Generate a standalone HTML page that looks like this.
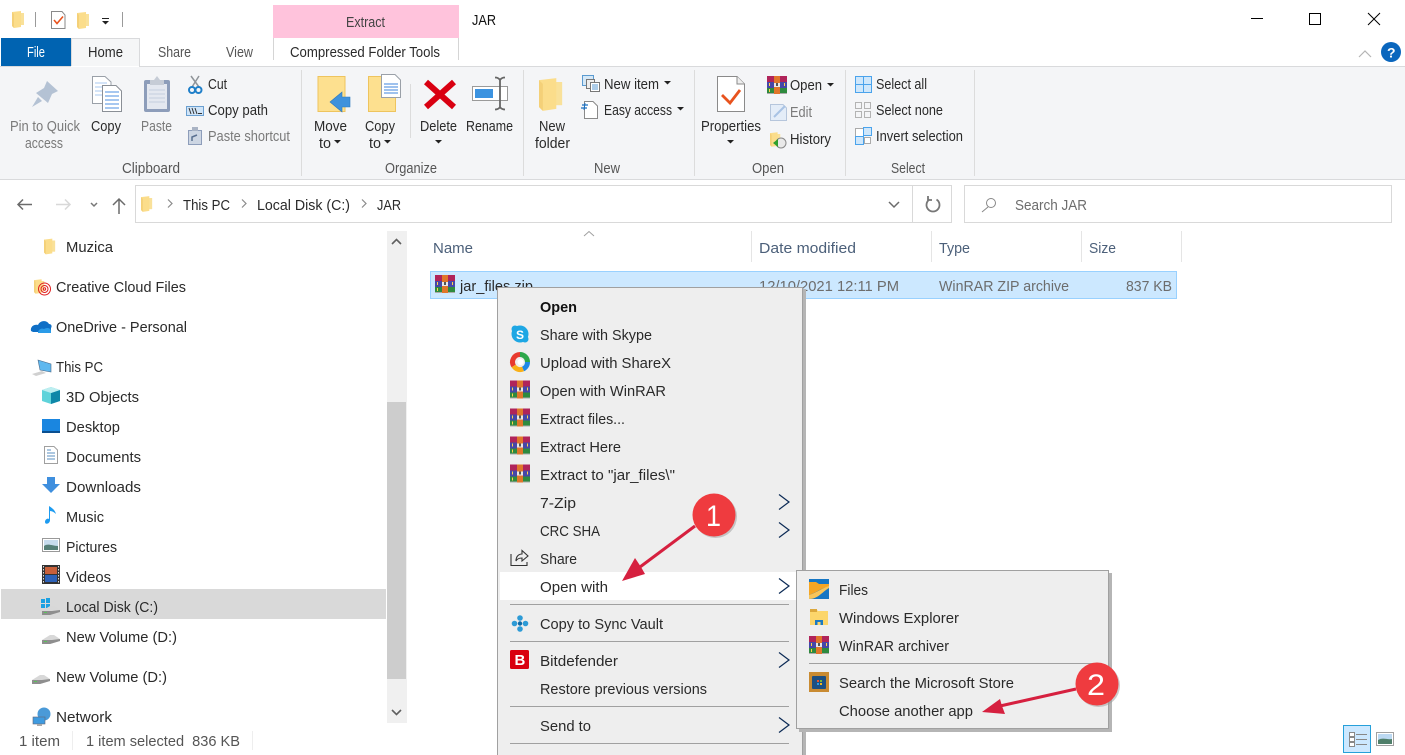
<!DOCTYPE html>
<html><head><meta charset="utf-8"><title>JAR</title>
<style>
html,body{margin:0;padding:0;background:#fff;overflow:hidden}
svg{display:block}
text{font-family:"Liberation Sans",sans-serif;font-size:14.6px;fill:#2a2a2a}
.g{fill:#7a7a7a}.h{fill:#4c607a}.m{fill:#6d6d6d}.d{fill:#555}
.l{stroke:#d9d9d9;stroke-width:1;fill:none}
.ch{fill:none;stroke-width:1.2}
</style></head><body>
<svg width="1405" height="755" viewBox="0 0 1405 755" xmlns="http://www.w3.org/2000/svg">
<defs>
<symbol id="fold" viewBox="0 0 13 17" overflow="visible">
<path d="M0 1 L9 0 L9 2 L12 2 L12 14 L9 14 L9 16 L2 17 L0 15Z" fill="#fbdd8b"/>
<path d="M0 1 L2 3 V17 L0 15Z" fill="#f4d078"/>
<path d="M9 2 H12 V14 H9Z" fill="#f9e19a"/>
</symbol>
<symbol id="rar" viewBox="0 0 20 18" overflow="visible">
<rect x="0" y="0" width="20" height="6" fill="#b0245a"/>
<rect x="0" y="6" width="20" height="6" fill="#4547a8"/>
<rect x="0" y="12" width="20" height="6" fill="#2e8a3e"/>
<rect x="0" y="17" width="20" height="1" fill="#aaa"/>
<rect x="7" y="0" width="6" height="18" fill="#e0762b"/>
<rect x="7" y="7" width="6" height="4" fill="#e8e8e8"/>
<rect x="9" y="7" width="2" height="3" fill="#555"/>
<rect x="2" y="7" width="1" height="3" fill="#ffd24a"/>
<rect x="2" y="13" width="1" height="3" fill="#ffd24a"/>
<rect x="17" y="7" width="1" height="3" fill="#ffd24a"/>
</symbol>
<symbol id="drv" viewBox="0 0 18 10" overflow="visible">
<path d="M0 6 L8 1 H12 L18 5 V7 L8 10 H0Z" fill="#d8d8d8"/>
<path d="M0 6 L10 6 L18 5 V7 L8 10 H0Z" fill="#8e8e8e"/>
<rect x="2" y="7" width="3" height="1" fill="#5bc25b"/>
</symbol>
</defs>

<rect width="1405" height="755" fill="#fff"/>

<!-- QAT -->
<use href="#fold" x="12" y="11" width="13" height="17"/>
<line x1="35.5" y1="12" x2="35.5" y2="27" stroke="#9a9a9a"/>
<path d="M51.5 11.5 H62 L65 15 V28.5 H51.5Z" fill="#fff" stroke="#8a8a8a"/>
<path d="M54 20 L57 23.5 L63 16.5" fill="none" stroke="#e8531e" stroke-width="1.6"/>
<use href="#fold" x="77" y="12" width="13" height="17"/>
<rect x="102" y="18" width="7" height="1" fill="#222"/><path d="M102 21 H109 L105.5 24.5Z" fill="#222"/>
<line x1="122.5" y1="12" x2="122.5" y2="27" stroke="#9a9a9a"/>

<!-- Tabs -->
<rect x="273" y="5" width="186" height="33" fill="#ffc3dc"/>
<text x="346" y="27" textLength="39" lengthAdjust="spacingAndGlyphs" fill="#444" style="fill:#444">Extract</text>
<line x1="273.5" y1="38" x2="273.5" y2="60" stroke="#d5d5d5"/>
<line x1="458.5" y1="38" x2="458.5" y2="60" stroke="#d5d5d5"/>
<text x="472" y="25" textLength="24" lengthAdjust="spacingAndGlyphs" style="fill:#111">JAR</text>
<rect x="1" y="38" width="70" height="28" fill="#0063b1"/>
<text x="27" y="57" textLength="18" lengthAdjust="spacingAndGlyphs" style="fill:#fff">File</text>
<path d="M71.5 66 V38.5 H139.5 V66" fill="#f5f6f7" stroke="#d9dadc"/>
<text x="88" y="57" textLength="35" lengthAdjust="spacingAndGlyphs">Home</text>
<text x="158" y="57" textLength="33" lengthAdjust="spacingAndGlyphs" class="d">Share</text>
<text x="226" y="57" textLength="27" lengthAdjust="spacingAndGlyphs" class="d">View</text>
<text x="290" y="57" textLength="150" lengthAdjust="spacingAndGlyphs">Compressed Folder Tools</text>
<path d="M1359 57 L1365 51 L1371 57" fill="none" stroke="#b5b5b5" stroke-width="1.2"/>
<circle cx="1391" cy="52" r="10" fill="#0a66bd"/>
<text x="1387" y="57.500" style="fill:#fff;font-weight:bold;font-size:14px">?</text>

<!-- Window controls -->
<rect x="1251" y="18" width="12" height="1" fill="#000"/>
<rect x="1309.500" y="13.500" width="11" height="11" fill="none" stroke="#000"/>
<path d="M1368 13 L1380 25 M1380 13 L1368 25" stroke="#000" fill="none"/>

<!-- Ribbon -->
<rect x="0" y="67" width="1405" height="112" fill="#f4f5f7"/>
<rect x="0" y="66" width="71" height="1" fill="#d9dadc"/><rect x="139" y="66" width="1266" height="1" fill="#d9dadc"/>
<rect x="0" y="179" width="1405" height="1" fill="#d9dadc"/>
<g stroke="#dcdcdc"><line x1="301.500" y1="70" x2="301.500" y2="176"/><line x1="523.500" y1="70" x2="523.500" y2="176"/><line x1="694.500" y1="70" x2="694.500" y2="176"/><line x1="845.500" y1="70" x2="845.500" y2="176"/><line x1="974.500" y1="70" x2="974.500" y2="176"/><line x1="410.500" y1="84" x2="410.500" y2="138"/></g>

<!-- Pin -->
<path d="M47 81 L58 91 L52 94 L48 103 L36 93 L44 88Z M38 97 L32 107 L42 101Z" fill="#b4c2d4"/>
<!-- Copy -->
<path d="M92.500 76.500 H105 L111 82 V103.500 H92.500Z" fill="#fff" stroke="#9aa0a8"/>
<path d="M95 83 H107 M95 87 H107 M95 91 H107 M95 95 H107" stroke="#a9c8f0"/>
<path d="M102.500 85.500 H116 L121.500 91 V111.500 H102.500Z" fill="#fff" stroke="#8a8f96"/>
<path d="M105 92 H119 M105 96 H119 M105 100 H119 M105 104 H119 M105 108 H119" stroke="#4c8fe0"/>
<!-- Paste -->
<rect x="144" y="80" width="26" height="32" rx="2" fill="#8d9dba"/>
<rect x="147" y="84" width="20" height="25" fill="#e4e8f0"/>
<path d="M149 90 H165 M149 94 H165 M149 98 H165 M149 102 H165" stroke="#c5cede"/>
<path d="M150 80 H154 L157 76 L160 80 H164 V85 H150Z" fill="#c6ccd6"/>
<!-- Cut -->
<path d="M191 76 L199 87 M199 76 L192 87" stroke="#8f9499" stroke-width="1.5" fill="none"/>
<circle cx="192" cy="90" r="3" fill="none" stroke="#1f7fc9" stroke-width="2"/><circle cx="198.500" cy="90" r="3" fill="none" stroke="#1f7fc9" stroke-width="2"/>
<!-- Copy path -->
<rect x="186.500" y="106.500" width="17" height="9" fill="#cfe4f8" stroke="#6a9fd0"/>
<path d="M189 108 L191 114 M192 108 L194 114 M195 108 L197 114" stroke="#333"/>
<rect x="198" y="113" width="4" height="1" fill="#333"/>
<!-- Paste shortcut -->
<rect x="188.500" y="130.500" width="13" height="14" fill="#cdd6e3" stroke="#8d9dba"/>
<rect x="192" y="127" width="6" height="4" fill="#a9b3c4"/>
<path d="M192 141 V137 L197 135" fill="none" stroke="#5a7090" stroke-width="1.500"/>
<text x="10" y="131" textLength="70" lengthAdjust="spacingAndGlyphs" class="g">Pin to Quick</text>
<text x="25" y="148" textLength="38" lengthAdjust="spacingAndGlyphs" class="g">access</text>
<text x="91" y="131" textLength="30" lengthAdjust="spacingAndGlyphs">Copy</text>
<text x="141" y="131" textLength="31" lengthAdjust="spacingAndGlyphs" class="g">Paste</text>
<text x="208" y="89" textLength="19" lengthAdjust="spacingAndGlyphs">Cut</text>
<text x="208" y="115" textLength="60" lengthAdjust="spacingAndGlyphs">Copy path</text>
<text x="208" y="141" textLength="82" lengthAdjust="spacingAndGlyphs" class="g">Paste shortcut</text>
<text x="122" y="173" textLength="58" lengthAdjust="spacingAndGlyphs" class="d">Clipboard</text>

<!-- Move to -->
<rect x="318" y="76.500" width="27" height="35" fill="#fde08f" stroke="#eec45e"/>
<path d="M330 103 L342 93 V98 H350 V108 H342 V113Z" fill="#3f92dc" stroke="#2d78bd" stroke-width=".6" transform="translate(0,-1)"/>
<text x="314" y="131" textLength="33" lengthAdjust="spacingAndGlyphs">Move</text>
<text x="319" y="148" textLength="12" lengthAdjust="spacingAndGlyphs">to</text>
<path d="M334 140 H341 L337.500 143.500Z" fill="#222"/>
<!-- Copy to -->
<rect x="368.500" y="76.500" width="27" height="35" fill="#fde08f" stroke="#eec45e"/>
<path d="M381.500 74.500 H395 L400.500 80 V97.500 H381.500Z" fill="#fff" stroke="#9aa0a8"/>
<path d="M384 84 H398 M384 87 H398 M384 90 H398 M384 93 H398" stroke="#3f86de"/>
<text x="365" y="131" textLength="30" lengthAdjust="spacingAndGlyphs">Copy</text>
<text x="369" y="148" textLength="12" lengthAdjust="spacingAndGlyphs">to</text>
<path d="M384 140 H391 L387.500 143.500Z" fill="#222"/>
<!-- Delete -->
<path d="M426 82 L454 107 M454 82 L426 107" stroke="#d90012" stroke-width="6" fill="none"/>
<text x="420" y="131" textLength="37" lengthAdjust="spacingAndGlyphs">Delete</text>
<path d="M435 140 H442 L438.500 143.500Z" fill="#222"/>
<!-- Rename -->
<rect x="472.500" y="86.500" width="35" height="14" fill="#fff" stroke="#9a9a9a"/>
<rect x="475" y="89" width="18" height="9" fill="#3c93e0"/>
<path d="M495 77.500 C498 77.500 499 78.500 500 80 C501 78.500 502 77.500 505 77.500 M495 109.500 C498 109.500 499 108.500 500 107 C501 108.500 502 109.500 505 109.500 M500 80 V107" fill="none" stroke="#666" stroke-width="1.800"/>
<text x="466" y="131" textLength="47" lengthAdjust="spacingAndGlyphs">Rename</text>
<text x="385" y="173" textLength="52" lengthAdjust="spacingAndGlyphs" class="d">Organize</text>

<!-- New -->
<use href="#fold" x="539" y="77" width="25" height="35"/>
<text x="539" y="131" textLength="26" lengthAdjust="spacingAndGlyphs">New</text>
<text x="535" y="148" textLength="35" lengthAdjust="spacingAndGlyphs">folder</text>
<rect x="582.500" y="75.500" width="11" height="10" fill="#d5e8f7" stroke="#5a9ad0"/>
<rect x="586.500" y="79.500" width="8" height="9" fill="#eee" stroke="#777"/>
<rect x="590.500" y="82.500" width="9" height="9" fill="#fff" stroke="#777"/>
<path d="M592 85 H598 M592 87 H598 M592 89 H598" stroke="#5a9ad0"/>
<text x="604" y="89" textLength="55" lengthAdjust="spacingAndGlyphs">New item</text>
<path d="M664 81 H671 L667.500 84.500Z" fill="#222"/>
<path d="M584.500 101.500 H593 L597.500 106 V118.500 H584.500Z" fill="#fff" stroke="#8a8a8a"/>
<path d="M582 105 H588 M581 108 H587" stroke="#1a6fc0" stroke-width="1.200"/><line x1="585" y1="103" x2="584" y2="110" stroke="#1a6fc0"/>
<text x="604" y="115" textLength="68" lengthAdjust="spacingAndGlyphs">Easy access</text>
<path d="M677 107 H684 L680.500 110.500Z" fill="#222"/>
<text x="594" y="173" textLength="26" lengthAdjust="spacingAndGlyphs" class="d">New</text>

<!-- Open -->
<path d="M717.500 76.500 H737 L744.500 84 V111.500 H717.500Z" fill="#fff" stroke="#8a8a8a"/>
<path d="M737 76.500 V84 H744.500" fill="#eee" stroke="#8a8a8a"/>
<path d="M722 95 L730 103 L740 90" fill="none" stroke="#e8531e" stroke-width="2.800"/>
<text x="701" y="131" textLength="60" lengthAdjust="spacingAndGlyphs">Properties</text>
<path d="M727 140 H734 L730.500 143.500Z" fill="#222"/>
<use href="#rar" x="767" y="76" width="20" height="18"/>
<text x="790" y="90" textLength="32" lengthAdjust="spacingAndGlyphs">Open</text>
<path d="M827 83 H834 L830.500 86.500Z" fill="#222"/>
<path d="M770.500 104.500 H783 L786.500 108 V120.500 H770.500Z" fill="#e4edf8" stroke="#b6c6dc"/>
<path d="M774 117 L785 106" stroke="#a9c3e4" stroke-width="2"/>
<text x="790" y="117" textLength="22" lengthAdjust="spacingAndGlyphs" class="g">Edit</text>
<use href="#fold" x="770" y="131" width="11" height="17"/>
<circle cx="781" cy="143" r="5" fill="#e9e9e9" stroke="#888"/>
<path d="M773 143 L778 139 V147Z" fill="#2ea02e"/>
<text x="790" y="144" textLength="41" lengthAdjust="spacingAndGlyphs">History</text>
<text x="752" y="173" textLength="32" lengthAdjust="spacingAndGlyphs" class="d">Open</text>

<!-- Select -->
<rect x="855" y="76" width="17" height="17" fill="#4aa3ec"/>
<g fill="#cfe7fb"><rect x="856" y="77" width="7" height="7"/><rect x="864" y="77" width="7" height="7"/><rect x="856" y="85" width="7" height="7"/><rect x="864" y="85" width="7" height="7"/></g>
<g fill="none" stroke="#b3b3b3"><rect x="855.500" y="102.500" width="6" height="6"/><rect x="864.500" y="102.500" width="6" height="6"/><rect x="855.500" y="111.500" width="6" height="6"/><rect x="864.500" y="111.500" width="6" height="6"/></g>
<g fill="#cfe7fb" stroke="#4aa3ec"><rect x="855.500" y="128.500" width="8" height="8" fill="#fff" stroke="#aaa"/><rect x="863.500" y="127.500" width="8" height="8"/><rect x="855.500" y="136.500" width="8" height="8"/><rect x="864.500" y="137.500" width="6" height="6" fill="#fff" stroke="#aaa"/></g>
<text x="876" y="89" textLength="51" lengthAdjust="spacingAndGlyphs">Select all</text>
<text x="876" y="115" textLength="67" lengthAdjust="spacingAndGlyphs">Select none</text>
<text x="876" y="141" textLength="87" lengthAdjust="spacingAndGlyphs">Invert selection</text>
<text x="891" y="173" textLength="34" lengthAdjust="spacingAndGlyphs" class="d">Select</text>

<!-- Nav -->
<path d="M18 204.500 H32 M23 199.500 L18 204.500 L23 209.500" fill="none" stroke="#6b6b6b" stroke-width="1.500"/>
<path d="M56 204.500 H70 M65 199.500 L70 204.500 L65 209.500" fill="none" stroke="#d8d8d8" stroke-width="1.500"/>
<path d="M91 203 L94 206 L97 203" fill="none" stroke="#777" stroke-width="1.500"/>
<path d="M119 214 V199 M113 205 L119 199 L125 205" fill="none" stroke="#6b6b6b" stroke-width="1.500"/>
<rect x="135.500" y="185.500" width="816" height="37" class="l"/>
<line x1="912.500" y1="186" x2="912.500" y2="222" stroke="#d9d9d9"/>
<rect x="964.500" y="185.500" width="427" height="37" class="l"/>
<use href="#fold" x="141" y="196" width="12" height="16"/>
<path d="M168 199.500 L172 203.500 L168 207.500 M242 199.500 L246 203.500 L242 207.500 M362 199.500 L366 203.500 L362 207.500" fill="none" stroke="#8a8a8a" stroke-width="1.200"/>
<text x="183" y="210" textLength="47" lengthAdjust="spacingAndGlyphs">This PC</text>
<text x="257" y="210" textLength="93" lengthAdjust="spacingAndGlyphs">Local Disk (C:)</text>
<text x="377" y="210" textLength="24" lengthAdjust="spacingAndGlyphs">JAR</text>
<path d="M889 202 L894 207 L899 202" fill="none" stroke="#6b6b6b" stroke-width="1.500"/>
<path d="M929.500 199.500 A6.500 6.500 0 1 0 936.500 199.500 M928 196 V200 H932" fill="none" stroke="#777" stroke-width="1.800"/>
<circle cx="991" cy="203" r="4.500" fill="none" stroke="#888"/><line x1="988" y1="207" x2="982" y2="212" stroke="#888"/>
<text x="1015" y="210" textLength="72" lengthAdjust="spacingAndGlyphs" class="m">Search JAR</text>

<!-- Sidebar -->
<rect x="1" y="589" width="385" height="30" fill="#d9d9d9"/>
<rect x="387" y="231" width="20" height="492" fill="#f0f0f0"/>
<rect x="387" y="402" width="19" height="277" fill="#cdcdcd"/>
<path d="M392 244 L396.500 239.500 L401 244 M392 710 L396.500 714.500 L401 710" fill="none" stroke="#606060" stroke-width="1.600"/>
<use href="#fold" x="44" y="238" width="12" height="17"/>
<use href="#fold" x="34" y="278" width="11" height="17"/>
<g fill="none" stroke="#e02020"><circle cx="44.500" cy="289" r="6"/><circle cx="44.500" cy="289" r="3.500"/><circle cx="44.500" cy="289" r="1.200"/></g>
<path d="M31 331 C30 326 35 324 38 325 C40 320 47 320 49 324 C52 324 52 327 51 328 V332 H33Z" fill="#0f6fc6"/>
<path d="M38 333 C38 329 42 328 44 329 C47 327 51 328 51 331 V333Z" fill="#2a9be8"/>
<path d="M38 360 L51 364 V372 L40 370Z" fill="#5fb8ef" stroke="#4a6a8a" stroke-width=".6"/>
<path d="M32 374 L42 371 L46 373 L36 376Z" fill="#d0d0d0"/>
<path d="M42 390 L51 387 L60 390 V401 L51 404 L42 401Z" fill="#5fd3da"/><path d="M51 393 L60 390 V401 L51 404Z" fill="#0f87a8"/><path d="M42 390 L51 387 L60 390 L51 393Z" fill="#bdeef0"/>
<rect x="42" y="419" width="18" height="14" fill="#1a86e0"/><rect x="42" y="431" width="18" height="2" fill="#0a4f90"/>
<path d="M44.500 446.500 H54 L57.500 450 V463.500 H44.500Z" fill="#fff" stroke="#a0a0a0"/><path d="M47 450 H51 M47 453 H55 M47 456 H55 M47 459 H55" stroke="#5a8fc0"/>
<path d="M47 477 H55 V484 H60 L51 493 L42 484 H47Z" fill="#3f8fde"/>
<path d="M50 506 L50 520 C50 524 45 525 45 522 C45 519 48 518 49 519 V506 C52 508 55 510 56 514 C54 512 52 511 50 511Z" fill="#1d9bf0"/>
<rect x="42.500" y="538.500" width="17" height="13" fill="#fff" stroke="#999"/><rect x="44" y="540" width="14" height="10" fill="#c7dcee"/><path d="M44 546 C48 543 52 546 58 546 V550 H44Z" fill="#557f78"/>
<rect x="42" y="565" width="18" height="19" fill="#333"/><rect x="45" y="567" width="12" height="7" fill="#c8603a"/><rect x="45" y="575" width="12" height="7" fill="#2d62b8"/>
<path d="M43.500 566 V584 M58.500 566 V584" stroke="#ddd" stroke-dasharray="1.500 1.500"/>
<rect x="41" y="599" width="4" height="4" fill="#1ba1e2"/><rect x="46" y="598" width="4" height="5" fill="#1ba1e2"/><rect x="41" y="604" width="4" height="4" fill="#1ba1e2"/><rect x="46" y="604" width="4" height="4" fill="#1ba1e2"/>
<use href="#drv" x="42" y="605" width="18" height="10"/>
<use href="#drv" x="42" y="634" width="18" height="10"/>
<use href="#drv" x="32" y="674" width="18" height="10"/>
<circle cx="44" cy="714" r="6.500" fill="#4a9ad8"/><rect x="33" y="717" width="12" height="7" fill="#3f9be0" stroke="#667" stroke-width=".6"/><rect x="37" y="724" width="5" height="2" fill="#aaa"/>
<g>
<text x="66" y="252" textLength="47" lengthAdjust="spacingAndGlyphs">Muzica</text>
<text x="56" y="292" textLength="130" lengthAdjust="spacingAndGlyphs">Creative Cloud Files</text>
<text x="56" y="332" textLength="131" lengthAdjust="spacingAndGlyphs">OneDrive - Personal</text>
<text x="56" y="372" textLength="47" lengthAdjust="spacingAndGlyphs">This PC</text>
<text x="66" y="402" textLength="73" lengthAdjust="spacingAndGlyphs">3D Objects</text>
<text x="66" y="432" textLength="54" lengthAdjust="spacingAndGlyphs">Desktop</text>
<text x="66" y="462" textLength="75" lengthAdjust="spacingAndGlyphs">Documents</text>
<text x="66" y="492" textLength="75" lengthAdjust="spacingAndGlyphs">Downloads</text>
<text x="66" y="522" textLength="38" lengthAdjust="spacingAndGlyphs">Music</text>
<text x="66" y="552" textLength="51" lengthAdjust="spacingAndGlyphs">Pictures</text>
<text x="66" y="582" textLength="45" lengthAdjust="spacingAndGlyphs">Videos</text>
<text x="66" y="612" textLength="92" lengthAdjust="spacingAndGlyphs">Local Disk (C:)</text>
<text x="66" y="642" textLength="111" lengthAdjust="spacingAndGlyphs">New Volume (D:)</text>
<text x="56" y="682" textLength="111" lengthAdjust="spacingAndGlyphs">New Volume (D:)</text>
<text x="56" y="722" textLength="56" lengthAdjust="spacingAndGlyphs">Network</text>
</g>
<!-- Status -->
<text x="19" y="746" textLength="41" lengthAdjust="spacingAndGlyphs" class="d">1 item</text>
<line x1="72.500" y1="731" x2="72.500" y2="750" stroke="#eee"/>
<text x="86" y="746" textLength="154" lengthAdjust="spacingAndGlyphs" class="d" xml:space="preserve">1 item selected  836 KB</text>
<line x1="252.500" y1="731" x2="252.500" y2="750" stroke="#eee"/>
<rect x="1343.500" y="725.500" width="27" height="27" fill="#cce8ff" stroke="#26a0da"/>
<g fill="none" stroke="#888"><rect x="1349.500" y="732.500" width="5" height="4" fill="#fff"/><rect x="1349.500" y="737.500" width="5" height="4" fill="#fff"/><rect x="1349.500" y="742.500" width="5" height="4" fill="#fff"/><path d="M1356 734.500 H1367 M1356 739.500 H1367 M1356 744.500 H1367"/></g>
<rect x="1376.500" y="732.500" width="17" height="13" fill="#fff" stroke="#a0a0a0"/><rect x="1378" y="734" width="14" height="10" fill="#bcd9f2"/><path d="M1378 740 C1383 737 1387 740 1392 739 V744 H1378Z" fill="#4f7f6a"/>

<!-- File list -->
<g stroke="#e5e5e5"><line x1="751.500" y1="231" x2="751.500" y2="262"/><line x1="931.500" y1="231" x2="931.500" y2="262"/><line x1="1081.500" y1="231" x2="1081.500" y2="262"/><line x1="1181.500" y1="231" x2="1181.500" y2="262"/></g>
<path d="M584 236 L589 231.500 L594 236" fill="none" stroke="#a0a0a0"/>
<text x="433" y="253" textLength="40" lengthAdjust="spacingAndGlyphs" class="h">Name</text>
<text x="759" y="253" textLength="97" lengthAdjust="spacingAndGlyphs" class="h">Date modified</text>
<text x="939" y="253" textLength="31" lengthAdjust="spacingAndGlyphs" class="h">Type</text>
<text x="1089" y="253" textLength="27" lengthAdjust="spacingAndGlyphs" class="h">Size</text>
<rect x="430.500" y="271.500" width="746" height="27" fill="#cce8ff" stroke="#99d1ff"/>
<use href="#rar" x="435" y="275" width="20" height="18"/>
<text x="460" y="291" textLength="73" lengthAdjust="spacingAndGlyphs">jar_files.zip</text>
<text x="759" y="291" textLength="140" lengthAdjust="spacingAndGlyphs" class="m">12/10/2021 12:11 PM</text>
<text x="939" y="291" textLength="130" lengthAdjust="spacingAndGlyphs" class="m">WinRAR ZIP archive</text>
<text x="1126" y="291" textLength="46" lengthAdjust="spacingAndGlyphs" class="m">837 KB</text>

<!-- Context menu -->
<rect x="803" y="289" width="3" height="466" fill="#b5b5b5"/>
<rect x="497.500" y="287.500" width="305" height="470" fill="#eee" stroke="#a0a0a0"/>
<rect x="500" y="572" width="300" height="28" fill="#fff"/>
<line x1="510" y1="604.500" x2="789" y2="604.500" stroke="#a0a0a0"/><line x1="510" y1="641.500" x2="789" y2="641.500" stroke="#a0a0a0"/><line x1="510" y1="706.500" x2="789" y2="706.500" stroke="#a0a0a0"/><line x1="510" y1="743.500" x2="789" y2="743.500" stroke="#a0a0a0"/>
<text x="540" y="312" textLength="37" lengthAdjust="spacingAndGlyphs" style="font-weight:bold;fill:#111">Open</text>
<text x="540" y="340" textLength="112" lengthAdjust="spacingAndGlyphs">Share with Skype</text>
<text x="540" y="368" textLength="131" lengthAdjust="spacingAndGlyphs">Upload with ShareX</text>
<text x="540" y="396" textLength="126" lengthAdjust="spacingAndGlyphs">Open with WinRAR</text>
<text x="540" y="424" textLength="85" lengthAdjust="spacingAndGlyphs">Extract files...</text>
<text x="540" y="452" textLength="81" lengthAdjust="spacingAndGlyphs">Extract Here</text>
<text x="540" y="480" textLength="135" lengthAdjust="spacingAndGlyphs">Extract to "jar_files\"</text>
<text x="540" y="508" textLength="36" lengthAdjust="spacingAndGlyphs">7-Zip</text>
<text x="540" y="536" textLength="60" lengthAdjust="spacingAndGlyphs">CRC SHA</text>
<text x="540" y="564" textLength="37" lengthAdjust="spacingAndGlyphs">Share</text>
<text x="540" y="592" textLength="68" lengthAdjust="spacingAndGlyphs">Open with</text>
<text x="540" y="629" textLength="123" lengthAdjust="spacingAndGlyphs">Copy to Sync Vault</text>
<text x="540" y="666" textLength="78" lengthAdjust="spacingAndGlyphs">Bitdefender</text>
<text x="540" y="694" textLength="167" lengthAdjust="spacingAndGlyphs">Restore previous versions</text>
<text x="540" y="731" textLength="51" lengthAdjust="spacingAndGlyphs">Send to</text>
<circle cx="520" cy="334" r="8.500" fill="#1ea7e4"/><circle cx="515" cy="329" r="3.500" fill="#1ea7e4"/><circle cx="525" cy="339" r="3.500" fill="#1ea7e4"/>
<text x="516" y="339" style="fill:#fff;font-weight:bold;font-size:12px">S</text>
<g fill="none" stroke-width="5"><path d="M513.700 366 A7.500 7.500 0 0 1 520 354.500" stroke="#e83a2e"/><path d="M520 354.500 A7.500 7.500 0 0 1 527.500 362" stroke="#2da84a"/><path d="M527.500 362 A7.500 7.500 0 0 1 523 369" stroke="#1e88e5"/><path d="M523 369 A7.500 7.500 0 0 1 513.700 366" stroke="#f9b017"/></g>
<circle cx="520.500" cy="362" r="3" fill="#fff"/>
<use href="#rar" x="510" y="380" width="20" height="19"/>
<use href="#rar" x="510" y="408" width="20" height="19"/>
<use href="#rar" x="510" y="436" width="20" height="19"/>
<use href="#rar" x="510" y="464" width="20" height="19"/>
<path d="M511 554 V565.500 H527 V562 M516 561 C516 556 519 554 522 554 V550.500 L528 556 L522 561 V558 C519 558 517 559 516 561Z" fill="none" stroke="#333" stroke-width="1.100"/>
<g fill="#2d9bd6"><circle cx="520" cy="618" r="2.800"/><circle cx="520" cy="629" r="2.800"/><circle cx="514.500" cy="623.500" r="2.800"/><circle cx="525.500" cy="623.500" r="2.800"/></g><circle cx="520" cy="623.500" r="2.200" fill="#0d6aa8"/>
<rect x="510" y="650" width="19" height="19" rx="1.500" fill="#d9000f"/>
<text x="514.500" y="665" style="fill:#fff;font-weight:bold;font-size:15px">B</text>
<g class="ch" stroke="#0b2a55"><path d="M779 494.500 L789 502 L779 509.500"/><path d="M779 522.500 L789 530 L779 537.500"/><path d="M779 578.500 L789 586 L779 593.500"/><path d="M779 652.500 L789 660 L779 667.500"/><path d="M779 717.500 L789 725 L779 732.500"/></g>

<!-- Submenu -->
<rect x="799" y="573" width="313" height="159" fill="#b5b5b5"/>
<rect x="796.500" y="570.500" width="312" height="158" fill="#eee" stroke="#a0a0a0"/>
<line x1="809" y1="663.500" x2="1097" y2="663.500" stroke="#a0a0a0"/>
<rect x="809" y="579" width="20" height="20" fill="#1576c4"/>
<path d="M809 582 H816 L819 584 H829 V587 C822 587 818 592 809 595Z" fill="#f6a623"/>
<path d="M809 595 C818 592 822 588 829 586 V588 C822 592 818 599 809 599Z" fill="#f8c55a"/>
<path d="M810 609 H816 L818 611 H828 V625 H810Z" fill="#fcd66b"/><rect x="810" y="609" width="7" height="3" fill="#dca83c"/>
<path d="M815 625 V620 H823 V625 H820.500 V622 H817.500 V625Z" fill="#1b7ac4"/>
<use href="#rar" x="809" y="636" width="20" height="18"/>
<rect x="809" y="672" width="20" height="20" fill="#c98b32"/><rect x="812" y="676" width="14" height="13" rx="1" fill="#1c4f82"/>
<rect x="817" y="680" width="2" height="2" fill="#e8502a"/><rect x="820" y="680" width="2" height="2" fill="#7cb83a"/><rect x="817" y="683" width="2" height="2" fill="#2a9be8"/><rect x="820" y="683" width="2" height="2" fill="#f5b71a"/>
<text x="839" y="595" textLength="29" lengthAdjust="spacingAndGlyphs">Files</text>
<text x="839" y="623" textLength="120" lengthAdjust="spacingAndGlyphs">Windows Explorer</text>
<text x="839" y="651" textLength="110" lengthAdjust="spacingAndGlyphs">WinRAR archiver</text>
<text x="839" y="688" textLength="175" lengthAdjust="spacingAndGlyphs">Search the Microsoft Store</text>
<text x="839" y="716" textLength="134" lengthAdjust="spacingAndGlyphs">Choose another app</text>

<!-- Annotations -->
<path d="M695 526 L640 567" stroke="#d6203f" stroke-width="3" fill="none"/>
<path d="M622 581 L635 558 L641 567 L645 574Z" fill="#d6203f"/>
<circle cx="715.500" cy="516.500" r="21.500" fill="#999" opacity=".5"/>
<circle cx="714" cy="515" r="21.500" fill="#ef3b3f"/>
<text x="706" y="526" style="fill:#fff;font-size:30px" textLength="15" lengthAdjust="spacingAndGlyphs">1</text>
<path d="M1076 689 L1000 706" stroke="#d6203f" stroke-width="3" fill="none"/>
<path d="M982 712 L1000 699 L1002 706 L1005 714Z" fill="#d6203f"/>
<circle cx="1098.500" cy="685.500" r="21.500" fill="#999" opacity=".5"/>
<circle cx="1097" cy="684" r="21.500" fill="#ef3b3f"/>
<text x="1087" y="695" style="fill:#fff;font-size:30px" textLength="18" lengthAdjust="spacingAndGlyphs">2</text>
</svg>
</body></html>
